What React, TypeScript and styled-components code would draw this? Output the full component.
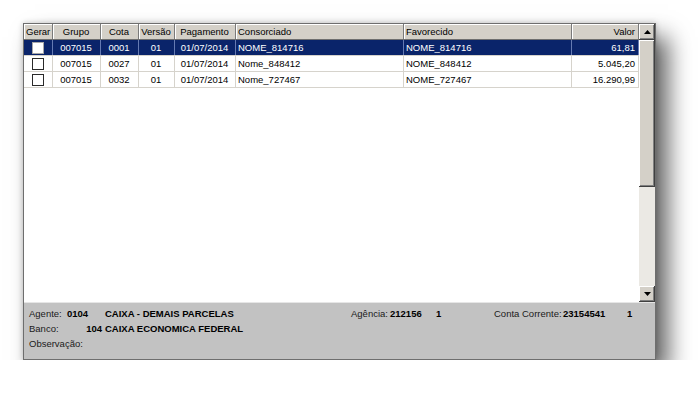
import styled, { createGlobalStyle, css } from 'styled-components';

const GlobalStyle = createGlobalStyle`
  html, body {
    margin: 0;
    padding: 0;
    background: #ffffff;
  }
  body {
    font-family: "Liberation Sans", Arial, sans-serif;
    font-size: 9.5px;
    color: #000;
  }
`;

const COLUMNS = '29px 48px 38px 36px 61px 168px 168px 67px';

const Window = styled.div`
  margin: 23px 0 0 23px;
  width: 633px;
  height: 337px;
  box-sizing: border-box;
  border: 1px solid #6e6e6e;
  display: flex;
  flex-direction: column;
  background: #c2c2c2;
  box-shadow: 12px 14px 22px rgba(0, 0, 0, 0.62), 0 0 6px rgba(0, 0, 0, 0.2);
`;

const GridArea = styled.div`
  display: flex;
  height: 278px;
  background: #ffffff;
`;

const Table = styled.div`
  flex: 1;
  display: flex;
  flex-direction: column;
  overflow: hidden;
`;

const Row = styled.div<{ $selected?: boolean; $header?: boolean }>`
  display: grid;
  grid-template-columns: ${COLUMNS};
  height: 16px;
  box-sizing: border-box;
  border-bottom: 1px solid ${({ $header }) => ($header ? '#6f6f6f' : '#d6d3cc')};
  background: ${({ $selected, $header }) =>
    $header ? '#d4d0c8' : $selected ? '#0a246a' : '#ffffff'};
  color: ${({ $selected }) => ($selected ? '#ffffff' : '#000')};
`;

const HeadCell = styled.div<{ $align?: string }>`
  display: flex;
  align-items: center;
  justify-content: ${({ $align }) => $align || 'center'};
  padding: 0 3px 0 2px;
  border-right: 1px solid #7a7a7a;
  box-shadow: inset 1px 1px 0 #ffffff;
  white-space: nowrap;
  overflow: hidden;
  color: #000;
`;

const Cell = styled.div<{ $align?: string; $selected?: boolean }>`
  display: flex;
  align-items: center;
  justify-content: ${({ $align }) => $align || 'center'};
  padding: 0 3px 0 2px;
  border-right: 1px solid
    ${({ $selected }) => ($selected ? 'rgba(140, 160, 210, 0.7)' : '#d6d3cc')};
  white-space: nowrap;
  overflow: hidden;
`;

const CheckBox = styled.span<{ $selected?: boolean }>`
  width: 12px;
  height: 12px;
  box-sizing: border-box;
  background: #ffffff;
  border: 1px solid ${({ $selected }) => ($selected ? '#a8a8a8' : '#2a2a2a')};
  margin-left: 1px;
`;

const ScrollBar = styled.div`
  width: 16px;
  display: flex;
  flex-direction: column;
  background: #ebe9e4;
`;

const raised = css`
  background: #d4d0c8;
  box-shadow: inset -1px -1px 0 #404040, inset 1px 1px 0 #ffffff,
    inset -2px -2px 0 #808080, inset 2px 2px 0 #d4d0c8;
`;

const ArrowButton = styled.div`
  ${raised};
  height: 16px;
  display: flex;
  align-items: center;
  justify-content: center;
`;

const Thumb = styled.div`
  ${raised};
  height: 147px;
`;

const Track = styled.div`
  flex: 1;
`;

const Panel = styled.div`
  flex: 1;
  border-top: 1px solid #e6e6e6;
  background: #c2c2c2;
  padding: 3px 0 0 5px;
  display: flex;
  flex-direction: column;
`;

const InfoLine = styled.div`
  display: flex;
  align-items: center;
  height: 15px;
  white-space: nowrap;
`;

const Label = styled.span<{ $w?: number }>`
  width: ${({ $w }) => ($w ? `${$w}px` : 'auto')};
  color: #1a1a1a;
`;

const Value = styled.span<{ $w?: number; $right?: boolean }>`
  width: ${({ $w }) => ($w ? `${$w}px` : 'auto')};
  font-weight: bold;
  text-align: ${({ $right }) => ($right ? 'right' : 'left')};
  padding-right: ${({ $right }) => ($right ? '3px' : '0')};
  box-sizing: border-box;
`;

const Arrow = ({ down }: { down?: boolean }) => (
  <svg width="7" height="4" viewBox="0 0 7 4">
    <polygon points={down ? '0,0 7,0 3.5,4' : '0,4 7,4 3.5,0'} fill="#000" />
  </svg>
);

type Parcela = {
  grupo: string;
  cota: string;
  versao: string;
  pagamento: string;
  consorciado: string;
  favorecido: string;
  valor: string;
};

const rows: Parcela[] = [
  { grupo: '007015', cota: '0001', versao: '01', pagamento: '01/07/2014', consorciado: 'NOME_814716', favorecido: 'NOME_814716', valor: '61,81' },
  { grupo: '007015', cota: '0027', versao: '01', pagamento: '01/07/2014', consorciado: 'Nome_848412', favorecido: 'NOME_848412', valor: '5.045,20' },
  { grupo: '007015', cota: '0032', versao: '01', pagamento: '01/07/2014', consorciado: 'Nome_727467', favorecido: 'NOME_727467', valor: '16.290,99' },
];

export default function App() {
  return (
    <>
      <GlobalStyle />
      <Window>
        <GridArea>
          <Table>
            <Row $header>
              <HeadCell $align="flex-start">Gerar</HeadCell>
              <HeadCell>Grupo</HeadCell>
              <HeadCell>Cota</HeadCell>
              <HeadCell>Versão</HeadCell>
              <HeadCell>Pagamento</HeadCell>
              <HeadCell $align="flex-start">Consorciado</HeadCell>
              <HeadCell $align="flex-start">Favorecido</HeadCell>
              <HeadCell $align="flex-end">Valor</HeadCell>
            </Row>
            {rows.map((r, i) => {
              const sel = i === 0;
              return (
                <Row key={r.cota} $selected={sel}>
                  <Cell $selected={sel}>
                    <CheckBox $selected={sel} />
                  </Cell>
                  <Cell $selected={sel}>{r.grupo}</Cell>
                  <Cell $selected={sel}>{r.cota}</Cell>
                  <Cell $selected={sel}>{r.versao}</Cell>
                  <Cell $selected={sel}>{r.pagamento}</Cell>
                  <Cell $selected={sel} $align="flex-start">{r.consorciado}</Cell>
                  <Cell $selected={sel} $align="flex-start">{r.favorecido}</Cell>
                  <Cell $selected={sel} $align="flex-end">{r.valor}</Cell>
                </Row>
              );
            })}
          </Table>
          <ScrollBar>
            <ArrowButton>
              <Arrow />
            </ArrowButton>
            <Thumb />
            <Track />
            <ArrowButton>
              <Arrow down />
            </ArrowButton>
          </ScrollBar>
        </GridArea>
        <Panel>
          <InfoLine>
            <Label $w={38}>Agente:</Label>
            <Value $w={38}>0104</Value>
            <Value $w={246}>CAIXA - DEMAIS PARCELAS</Value>
            <Label $w={39}>Agência:</Label>
            <Value $w={46}>212156</Value>
            <Value $w={58}>1</Value>
            <Label $w={69}>Conta Corrente:</Label>
            <Value $w={64}>23154541</Value>
            <Value>1</Value>
          </InfoLine>
          <InfoLine>
            <Label $w={38}>Banco:</Label>
            <Value $w={38} $right>104</Value>
            <Value>CAIXA ECONOMICA FEDERAL</Value>
          </InfoLine>
          <InfoLine>
            <Label>Observação:</Label>
          </InfoLine>
        </Panel>
      </Window>
    </>
  );
}
